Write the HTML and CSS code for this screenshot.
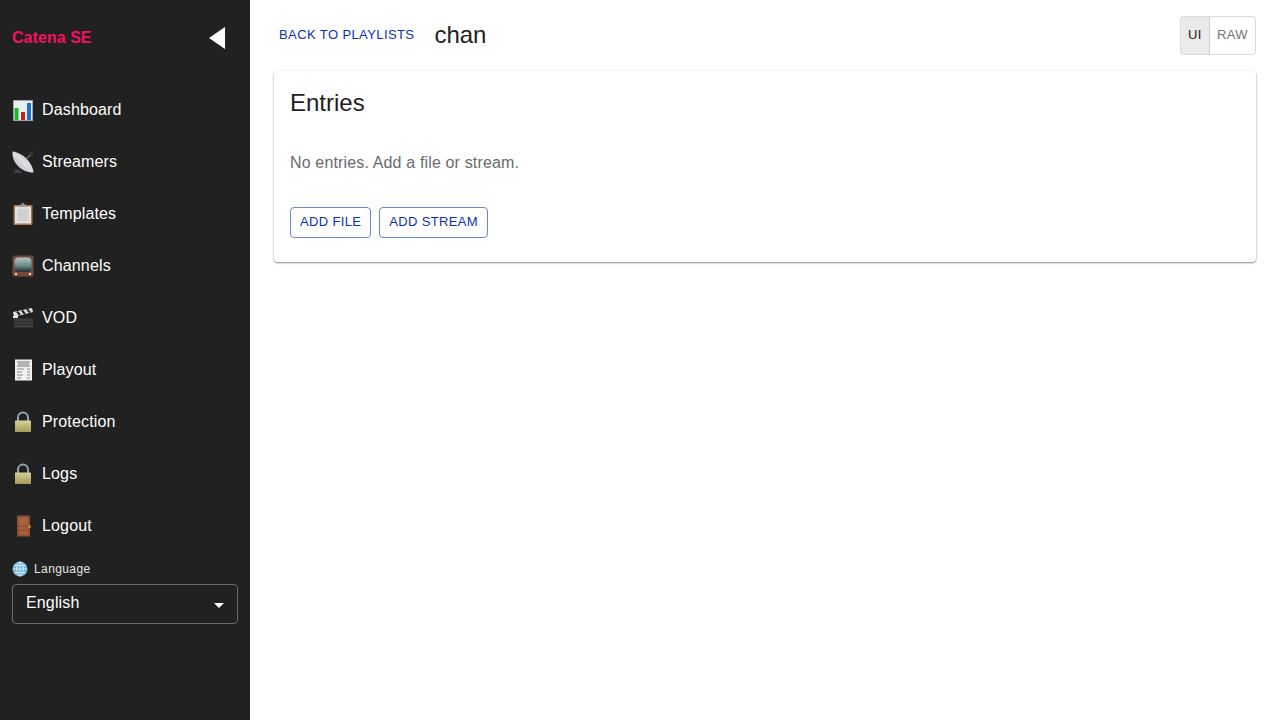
FILE: index.html
```html
<!DOCTYPE html>
<html>
<head>
    <title>Catena SE - Playlist</title>
    <link rel="stylesheet" href="styles.css">
</head>
<body>
    <div class="sidebar">
        <div class="brandRow">
            <span class="brand">Catena SE</span>
            <span class="collapseArrow"></span>
        </div>

        <nav class="navList">
            <a class="navItem">
                <svg class="navIcon" viewBox="0 0 22 22"><rect x="1.500" y="1.500" width="19" height="20" fill="#e8eef2" stroke="#9aa4ad" stroke-width="1"/><rect x="2.500" y="9" width="4" height="12" fill="#1fb52b"/><rect x="9" y="13" width="4" height="8" fill="#c8201f"/><rect x="15" y="4" width="4" height="17" fill="#1d6fd1"/></svg>
                <span>Dashboard</span>
            </a>
            <a class="navItem">
                <svg class="navIcon" viewBox="0 0 22 22"><defs><linearGradient id="dishFill" x1="0" y1="1" x2="1" y2="0"><stop offset="0" stop-color="#a4a8ad"/><stop offset="0.5" stop-color="#dcdee0"/><stop offset="1" stop-color="#bfc2c6"/></linearGradient></defs><path d="M3 18l-1 4h8l-2-3z" fill="#38424e"/><path d="M11 10L20 3" stroke="#555" stroke-width="2"/><path d="M17 1.500l4-1 .5 4-2.500 1z" fill="#33373c"/><path d="M0.500 0.500C10 1.500 20.500 11 21.500 21.500C10 22 -0.500 12 0.500 0.500z" fill="url(#dishFill)"/></svg>
                <span>Streamers</span>
            </a>
            <a class="navItem">
                <svg class="navIcon" viewBox="0 0 22 22"><rect x="1.500" y="2" width="19" height="20" rx="1" fill="#a9743f"/><rect x="3" y="3.500" width="16" height="17" fill="#e2e2e2"/><rect x="5.500" y="6" width="11" height="12" fill="#cfcfcf"/><rect x="7.500" y="1.500" width="7" height="2.500" fill="#9a9a9a"/><rect x="10" y="0" width="2" height="2" fill="#8a8a8a"/></svg>
                <span>Templates</span>
            </a>
            <a class="navItem">
                <svg class="navIcon" viewBox="0 0 22 22"><defs><linearGradient id="tvScreen" x1="0" y1="0" x2="0" y2="1"><stop offset="0" stop-color="#b4c6c5"/><stop offset="0.55" stop-color="#6d8c8b"/><stop offset="1" stop-color="#1c2e2e"/></linearGradient></defs><rect x="0.500" y="0.500" width="21" height="21" rx="2.500" fill="#75483a"/><rect x="2.500" y="2.500" width="17" height="14.500" rx="4" fill="url(#tvScreen)"/><circle cx="4" cy="19" r="1.200" fill="#e9d6c4"/><circle cx="18" cy="19" r="1.200" fill="#e9d6c4"/></svg>
                <span>Channels</span>
            </a>
            <a class="navItem">
                <svg class="navIcon" viewBox="0 0 22 22"><rect x="2" y="11" width="19" height="10" fill="#2e2e2e"/><path d="M2 13h19M2 16h19M2 19h19" stroke="#4c4c4c" stroke-width="1"/><path d="M1 5l19-4 1 4L2 10z" fill="#ddd"/><path d="M5 4.500l3 3.500M10 3.500l3 3.500M15 2.200l3 3.500" stroke="#222" stroke-width="2"/><rect x="1" y="9" width="5" height="2" fill="#e6e6e6"/></svg>
                <span>VOD</span>
            </a>
            <a class="navItem">
                <svg class="navIcon" viewBox="0 0 22 22"><rect x="3" y="0.500" width="17" height="21" fill="#f1f1ef"/><path d="M5 3h13M6 5h11M5 7h13" stroke="#777" stroke-width="1"/><path d="M5 10h7M5 13h5M5 16h6M5 19h4M15 10h3M15 13h3M15 16h3M15 19h3" stroke="#888" stroke-width="1"/></svg>
                <span>Playout</span>
            </a>
            <a class="navItem">
                <svg class="navIcon" viewBox="0 0 22 22"><use href="#lockIcon"/></svg>
                <span>Protection</span>
            </a>
            <a class="navItem">
                <svg class="navIcon" viewBox="0 0 22 22"><use href="#lockIcon"/></svg>
                <span>Logs</span>
            </a>
            <a class="navItem">
                <svg class="navIcon" viewBox="0 0 22 22"><rect x="5" y="0.500" width="13" height="21" fill="#8f5031"/><rect x="7" y="2.500" width="9" height="8" fill="#a8623f"/><rect x="7" y="12" width="9" height="2.500" fill="#a8623f"/><rect x="7" y="16" width="9" height="3.500" fill="#a8623f"/><rect x="16.500" y="10" width="2" height="3" fill="#c79a30"/></svg>
                <span>Logout</span>
            </a>
        </nav>

        <div class="languageLabel">
            <svg class="globeIcon" viewBox="0 0 16 16"><circle cx="8" cy="8" r="7.500" fill="#74b7dc"/><path d="M1 8h14M8 1v14M2 4.500h12M2 11.500h12" stroke="#cfe4ee" stroke-width="1"/><ellipse cx="8" cy="8" rx="3.500" ry="7" fill="none" stroke="#cfe4ee" stroke-width="1"/></svg>
            <span>Language</span>
        </div>
        <div class="languageSelect">
            <span>English</span>
            <span class="selectCaret"></span>
        </div>
    </div>

    <div class="main">
        <div class="topBar">
            <div class="topLeft">
                <button class="textButton">Back to playlists</button>
                <h2 class="playlistName">chan</h2>
            </div>
            <div class="toggleGroup">
                <button class="toggleButton selected">UI</button>
                <button class="toggleButton">Raw</button>
            </div>
        </div>

        <div class="card">
            <h3 class="cardTitle">Entries</h3>
            <p class="emptyText">No entries. Add a file or stream.</p>
            <div class="cardActions">
                <button class="outlinedButton">Add file</button>
                <button class="outlinedButton">Add stream</button>
            </div>
        </div>
    </div>

    <svg class="svgDefs">
        <defs>
            <linearGradient id="lockBody" x1="0" y1="0" x2="0" y2="1">
                <stop offset="0" stop-color="#d8d194"/>
                <stop offset="1" stop-color="#a39b5c"/>
            </linearGradient>
            <g id="lockIcon">
                <path d="M6 10V6.500a5 5 0 0 1 10 0V10" fill="none" stroke="#8fa3b8" stroke-width="2"/>
                <rect x="3" y="9.500" width="16" height="11.500" rx="0.500" fill="url(#lockBody)"/>
            </g>
        </defs>
    </svg>
</body>
</html>
```

FILE: styles.css
```css
body {
    font-family: "Liberation Sans", Arial, sans-serif;
    margin: 0;
    height: 720px;
    overflow: hidden;
    display: flex;
    background-color: #ffffff;
    color: #212121;
}

.sidebar {
    width: 250px;
    flex-shrink: 0;
    box-sizing: border-box;
    padding: 0 12px;
    background-color: #212121;
    color: #ffffff;
}

.brandRow {
    height: 75px;
    display: flex;
    align-items: center;
    justify-content: space-between;
    padding-right: 13px;
}

.brand {
    font-size: 16px;
    font-weight: bold;
    letter-spacing: 0.05px;
    color: #f50f63;
}

.collapseArrow {
    width: 0;
    height: 0;
    border-top: 11px solid transparent;
    border-bottom: 11px solid transparent;
    border-right: 16px solid #ffffff;
}

.navList {
    display: flex;
    flex-direction: column;
    padding-top: 9px;
}

.navItem {
    height: 52px;
    display: flex;
    align-items: center;
    gap: 8px;
    font-size: 16px;
    letter-spacing: 0.15px;
}

.navIcon {
    width: 22px;
    height: 22px;
    flex-shrink: 0;
}

.languageLabel {
    display: flex;
    align-items: center;
    gap: 6px;
    height: 16px;
    margin-top: 9px;
    font-size: 12px;
    letter-spacing: 0.4px;
    color: #e4e4e4;
}

.globeIcon {
    width: 16px;
    height: 16px;
}

.languageSelect {
    margin-top: 7px;
    height: 40px;
    box-sizing: border-box;
    padding: 0 13px 2px 13px;
    display: flex;
    align-items: center;
    justify-content: space-between;
    border: 1px solid #6a6a6a;
    border-radius: 4px;
    font-size: 16px;
    letter-spacing: 0.15px;
}

.selectCaret {
    width: 0;
    height: 0;
    margin-top: 4px;
    border-left: 5px solid transparent;
    border-right: 5px solid transparent;
    border-top: 5px solid #ffffff;
}

.main {
    flex: 1;
    padding: 16px 24px;
}

.topBar {
    height: 39px;
    display: flex;
    align-items: center;
    justify-content: space-between;
    margin-bottom: 16px;
}

.topLeft {
    display: flex;
    align-items: center;
    gap: 15px;
    margin-bottom: 2px;
}

button {
    font-family: inherit;
    font-size: 13px;
    letter-spacing: 0.4px;
    text-transform: uppercase;
    background: none;
    cursor: pointer;
}

.textButton {
    border: none;
    padding: 4px 5px;
    color: #0b33b0;
}

.playlistName {
    margin: 0;
    font-size: 24px;
    font-weight: normal;
    line-height: 32px;
}

.toggleGroup {
    display: flex;
}

.toggleButton {
    height: 39px;
    padding: 0 7px 2px;
    border: 1px solid #dcdcdc;
    border-radius: 0 4px 4px 0;
    color: #757575;
}

.toggleButton.selected {
    width: 30px;
    padding: 0 0 2px;
    border-right: 1px solid #cfcfcf;
    border-radius: 4px 0 0 4px;
    background-color: #ebebeb;
    color: #212121;
}

.toggleButton.selected + .toggleButton {
    border-left: none;
}

.card {
    height: 191px;
    box-sizing: border-box;
    padding: 16px;
    border-radius: 4px;
    background-color: #ffffff;
    box-shadow: 0 1px 2px rgba(0, 0, 0, 0.45), 0 0 3px rgba(0, 0, 0, 0.06);
}

.cardTitle {
    margin: 0;
    font-size: 24px;
    font-weight: normal;
    line-height: 32px;
}

.emptyText {
    margin: 0;
    padding-top: 32px;
    font-size: 16px;
    line-height: 24px;
    letter-spacing: 0.15px;
    color: #6b6b6b;
}

.cardActions {
    display: flex;
    gap: 8px;
    margin-top: 32px;
}

.outlinedButton {
    height: 31px;
    padding: 0 9px 2px;
    border: 1px solid #6f86d3;
    border-radius: 4px;
    letter-spacing: 0.34px;
    color: #0b33b0;
}

.svgDefs {
    position: absolute;
    width: 0;
    height: 0;
}
```
